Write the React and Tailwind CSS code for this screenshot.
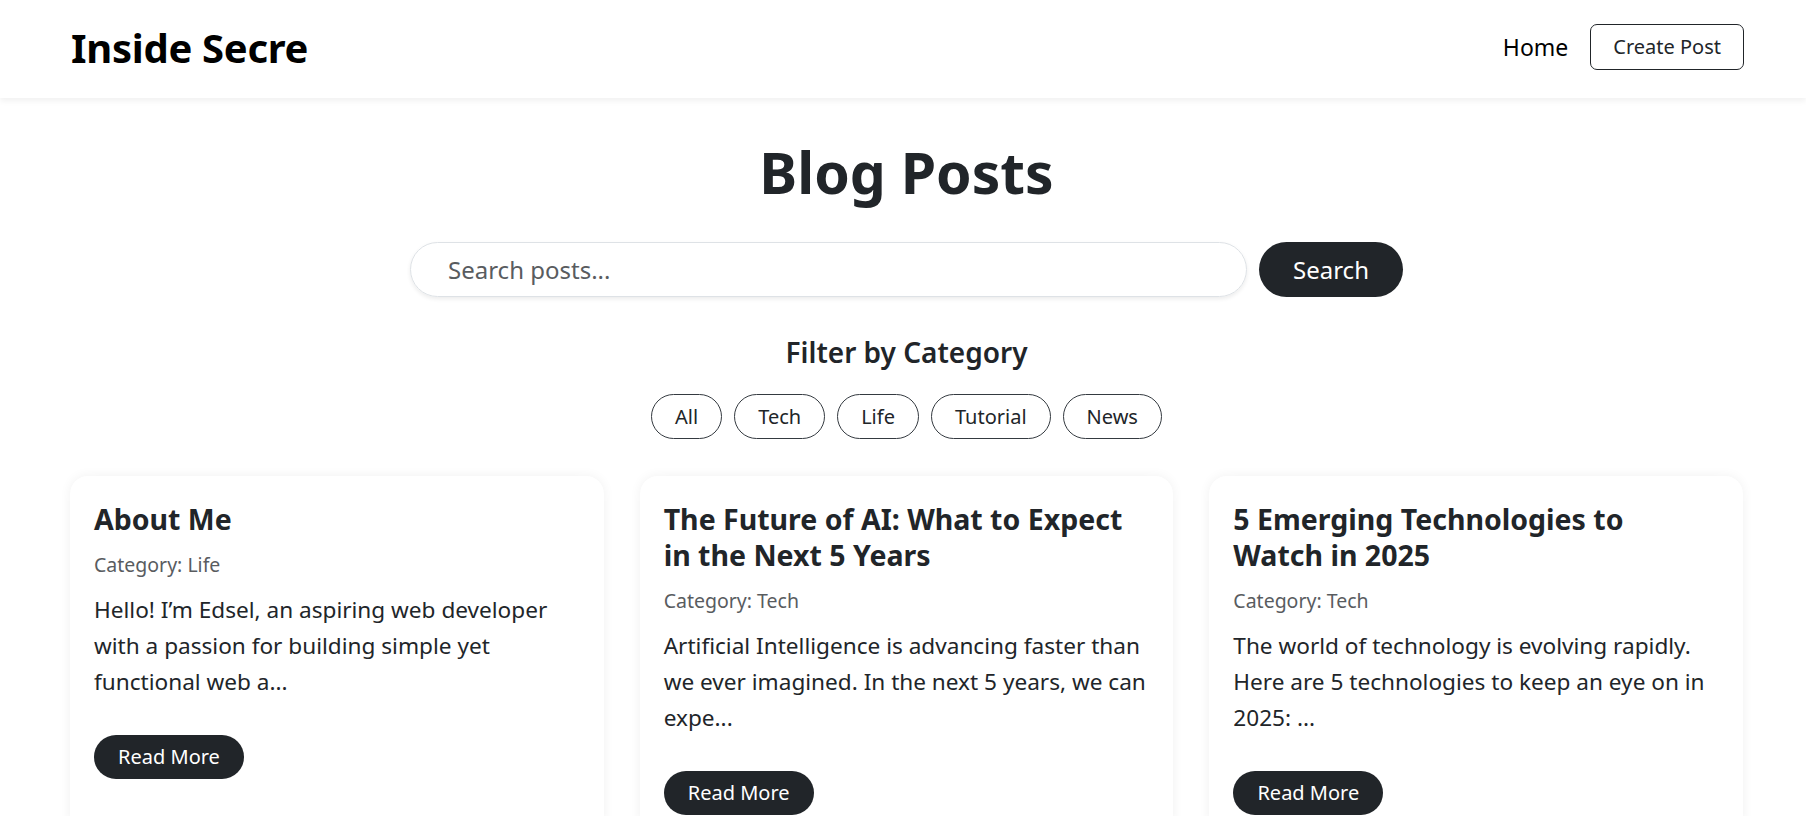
import React from "react";

const posts = [
  {
    title: "About Me",
    category: "Life",
    excerpt:
      "Hello! I’m Edsel, an aspiring web developer with a passion for building simple yet functional web a...",
  },
  {
    title: "The Future of AI: What to Expect in the Next 5 Years",
    category: "Tech",
    excerpt:
      "Artificial Intelligence is advancing faster than we ever imagined. In the next 5 years, we can expe...",
  },
  {
    title: "5 Emerging Technologies to Watch in 2025",
    category: "Tech",
    excerpt:
      "The world of technology is evolving rapidly. Here are 5 technologies to keep an eye on in 2025: ...",
  },
];

const categories = ["All", "Tech", "Life", "Tutorial", "News"];

function Navbar() {
  return (
    <nav className="h-[98px] bg-white shadow-[0_3px_6px_rgba(0,0,0,0.06)] flex items-center justify-between pl-[71px] pr-[62px] relative z-10">
      <a href="#" className="text-[40px] font-bold text-black leading-none tracking-[-0.3px] -mt-[2px]">
        Inside Secre
      </a>
      <div className="flex items-center gap-[22px] -mt-[4px]">
        <a href="#" className="text-[23px] text-black">
          Home
        </a>
        <button className="h-[46px] px-[22px] border border-[#212529] rounded-[7px] text-[20px] text-[#212529] leading-none">
          Create Post
        </button>
      </div>
    </nav>
  );
}

function PostCard({ post }) {
  return (
    <div className="bg-white rounded-[18px] shadow-[0_0_12px_rgba(0,0,0,0.06)] px-[24px] pt-[25px] pb-[24px]">
      <h3 className="text-[28.5px] font-bold leading-[36px] text-[#212529] mb-[13px]">
        {post.title}
      </h3>
      <p className="text-[19.5px] leading-[30px] text-[#595c5f] mb-[12px]">
        Category: {post.category}
      </p>
      <p className="text-[22.6px] leading-[36px] text-[#212529] mb-[35px]">
        {post.excerpt}
      </p>
      <button className="h-[44px] w-[150px] rounded-full bg-[#212529] text-white text-[20px] leading-none">
        Read More
      </button>
    </div>
  );
}

export default function App() {
  return (
    <div className="min-h-screen bg-white font-['Noto_Sans','Open_Sans',sans-serif] text-[#212529]">
      <Navbar />
      <main className="pl-[70px] pr-[63px]">
        <h1 className="text-center text-[57px] font-bold leading-[72px] mt-[38px]">
          Blog Posts
        </h1>
        <div className="flex justify-center gap-[12px] mt-[34px]">
          <input
            type="text"
            placeholder="Search posts..."
            className="w-[837px] h-[55px] rounded-full border border-[#dee2e6] shadow-[0_2px_4px_rgba(0,0,0,0.08)] pl-[37px] text-[24px] text-[#212529] placeholder:text-[#595c5f] outline-none"
          />
          <button className="w-[144px] h-[55px] rounded-full bg-[#212529] text-white text-[24px]">
            Search
          </button>
        </div>
        <h4 className="text-center text-[28px] font-semibold leading-[36px] mt-[37px]">
          Filter by Category
        </h4>
        <div className="flex justify-center gap-[12px] mt-[24px]">
          {categories.map((c) => (
            <button
              key={c}
              className="h-[45px] px-[23px] rounded-full border border-[#343a40] text-[20px] text-[#212529] leading-none"
            >
              {c}
            </button>
          ))}
        </div>
        <div className="grid grid-cols-3 gap-x-[36px] mt-[37px] pb-[40px]">
          {posts.map((p) => (
            <PostCard key={p.title} post={p} />
          ))}
        </div>
      </main>
    </div>
  );
}
